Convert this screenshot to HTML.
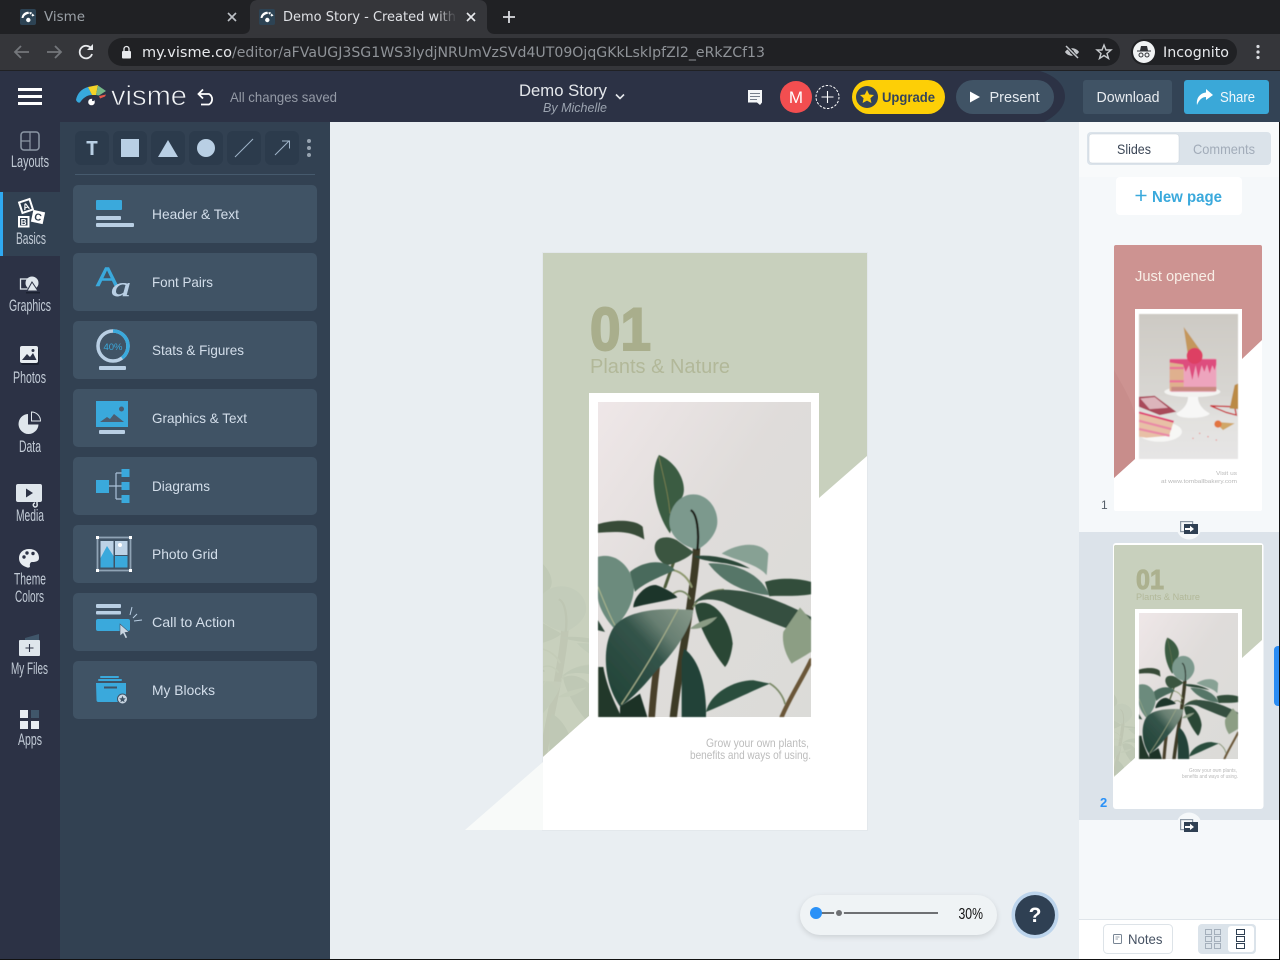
<!DOCTYPE html>
<html lang="en"><head><meta charset="utf-8"><title>Demo Story - Visme</title>
<style>
html,body{margin:0;padding:0;background:#e9eef2;width:1280px;height:960px;overflow:hidden}
svg{display:block}
text{font-family:"Liberation Sans",sans-serif}
.d{font-family:"DejaVu Sans",sans-serif}
.si{font-size:16.5px;fill:#c3ccd7;text-anchor:start}
.it{font-size:14px;fill:#d3deea}
</style></head><body>
<svg width="1280" height="960" viewBox="0 0 1280 960" xmlns="http://www.w3.org/2000/svg">
<defs>
<filter id="soft" x="-2%" y="-2%" width="104%" height="104%"><feGaussianBlur stdDeviation=".45"/></filter>
<linearGradient id="wall" x1="0" y1="0" x2="1" y2="1"><stop offset="0" stop-color="#efe7e8"/><stop offset=".45" stop-color="#dfdcda"/><stop offset="1" stop-color="#dbdbd8"/></linearGradient>
<linearGradient id="bigleaf" x1="0" y1="1" x2="1" y2="0"><stop offset="0" stop-color="#1f4034"/><stop offset=".55" stop-color="#34544a"/><stop offset=".72" stop-color="#687f72"/><stop offset="1" stop-color="#87998a"/></linearGradient>
<linearGradient id="fade" x1="0" x2="1"><stop offset="0" stop-color="#fff"/><stop offset=".88" stop-color="#fff"/><stop offset="1" stop-color="#fff" stop-opacity="0"/></linearGradient>
<mask id="tabfade" maskUnits="userSpaceOnUse" x="283" y="5" width="174" height="24"><rect x="283" y="5" width="174" height="24" fill="url(#fade)"/></mask>
<symbol id="plant" viewBox="414 -354 639 944" preserveAspectRatio="none">
<g fill="none" stroke-linecap="round">
<path d="M640 590C650 500 665 420 690 260C700 180 715 100 712 -30" stroke="#3d3a28" stroke-width="22"/>
<path d="M575 590C580 520 585 480 590 440" stroke="#4a3f2c" stroke-width="20"/>
<path d="M965 590C990 530 1030 470 1053 420" stroke="#6a5638" stroke-width="13"/>
<path d="M615 200L650 100" stroke="#4d5b3a" stroke-width="9"/>
<path d="M640 150C665 155 685 175 695 200" stroke="#8e9870" stroke-width="6"/>
<path d="M640 220C660 205 680 215 690 235" stroke="#7c8a68" stroke-width="5"/>
<path d="M700 260C720 225 750 210 790 208" stroke="#7c8a68" stroke-width="5"/>
<path d="M930 490C955 505 970 530 975 550" stroke="#7c8a68" stroke-width="5"/>
</g>
<path d="M597-195C570-150 575-40 630 40L660-60C690-90 660-170 597-195Z" fill="#3a5b43"/>
<path d="M597-190C610-130 625-80 630-20" stroke="#7c8250" stroke-width="2.5" fill="none"/>
<path d="M414 12C470-5 530 0 548 20L553 58C510 30 460 35 414 38Z" fill="#374c37"/>
<path d="M600 55C570 70 585 120 620 135C650 130 690 110 700 95L650 60C630 50 615 50 600 55Z" fill="#3b5540"/>
<path d="M414 440V590H440Z" fill="#a9b7a1"/>
<path d="M785 100C830 70 900 60 925 100L920 165C890 130 840 125 785 100Z" fill="#87a194"/>
<path d="M700 108C760 100 830 120 870 145L800 130C760 125 720 120 700 108Z" fill="#2c4737"/>
<path d="M745 130C800 125 900 150 928 225C860 220 790 190 745 130Z" fill="#567667"/>
<path d="M915 185C960 170 1020 175 1053 185V222C1010 230 960 225 928 228Z" fill="#324e3a"/>
<path d="M700 250C730 215 770 205 820 210C900 215 1000 260 1053 290V352C970 320 860 280 790 245C760 235 725 235 700 250Z" fill="#34503f"/>
<path d="M414 110C470 95 510 140 522 190C525 250 490 300 460 322C440 300 414 260 414 230Z" fill="#6c8b7d"/>
<path d="M414 200C430 240 450 290 465 315" stroke="#aab58e" stroke-width="3" fill="none"/>
<path d="M510 155C560 115 620 120 645 150C600 170 550 190 525 215Z" fill="#4a6a5b"/>
<path d="M520 262C520 230 560 190 590 195C620 205 650 225 652 232C610 245 560 250 520 262Z" fill="#1e3429"/>
<path d="M414 300L435 335L414 330Z" fill="#2e483a"/>
<path d="M430 440C440 500 465 550 485 590H415V440Z" fill="#22372b"/>
<path d="M480 558L540 520L562 590H480Z" fill="#1c3127"/>
<path d="M480 558C420 470 430 350 470 310C520 265 620 262 700 270C690 330 640 400 590 450C550 500 510 540 480 558Z" fill="url(#bigleaf)"/>
<path d="M484 552C540 470 600 370 655 266" stroke="#a5ae8a" stroke-width="3.5" fill="none"/>
<path d="M705 255C750 225 810 290 818 370C815 400 805 430 795 440C760 400 710 310 705 255Z" fill="#2b4636"/>
<path d="M665 590V420L672 385C720 420 740 500 738 590Z" fill="#244337"/>
<path d="M738 575C750 520 820 480 880 480L930 490C880 510 800 550 738 575Z" fill="#2b4e3c"/>
<path d="M970 335L1020 262L1053 300V395C1030 410 1010 420 995 430C975 400 965 365 970 335Z" fill="#8c9e84"/>
<path d="M690 325C720 300 750 295 772 290C750 315 720 330 690 325Z" fill="#8b9c85"/>
<path d="M628 5C628-40 660-77 700-77S772-40 772 5C772 40 740 75 712 88C670 80 628 50 628 5Z" fill="#7b998d"/>
<path d="M692-30C712-20 718 40 712 90" stroke="#1f1f17" stroke-width="7" fill="none"/>
</symbol>
<symbol id="cake" viewBox="178 576 297 436" preserveAspectRatio="none">
<defs><linearGradient id="cbg" x1="0" y1="0" x2="0" y2="1"><stop offset="0" stop-color="#cdcac4"/><stop offset=".55" stop-color="#d8d6d2"/><stop offset=".72" stop-color="#e2e1df"/><stop offset="1" stop-color="#e6e5e5"/></linearGradient></defs>
<rect x="178" y="576" width="297" height="436" fill="url(#cbg)"/>
<path d="M312 615L367 692L324 695Z" fill="#c4975c"/>
<ellipse cx="338" cy="810" rx="84" ry="16" fill="#f3f3f1"/>
<path d="M325 825H355C355 850 372 865 390 875C385 890 295 895 290 875C308 865 325 850 325 825Z" fill="#f7f7f6"/>
<rect x="270" y="710" width="140" height="100" rx="6" fill="#eda4bd"/>
<rect x="270" y="715" width="42" height="92" fill="#dfb08e"/>
<rect x="270" y="735" width="42" height="7" fill="#ea7398"/><rect x="270" y="775" width="42" height="7" fill="#ea7398"/>
<path d="M270 712H410V728L405 745L398 730L390 755L382 728L374 750L366 730L356 770L348 730L338 775L328 730L318 750L310 728L270 722Z" fill="#de4e7e"/>
<rect x="275" y="795" width="135" height="13" fill="#c98a82"/>
<circle cx="345" cy="702" r="24" fill="#dd3f63"/>
<path d="M178 825L225 822L290 870L240 880L178 855Z" fill="#a9485a"/>
<path d="M182 830L225 826L265 858L210 862Z" fill="#dcb4bb"/>
<ellipse cx="240" cy="930" rx="67" ry="30" fill="#f7f7f5"/>
<path d="M178 872L282 900L268 942L200 948L178 945Z" fill="#e8c0a6"/>
<path d="M178 897L275 922M178 922L270 942" stroke="#e98aa6" stroke-width="7"/>
<path d="M178 872L282 900" stroke="#df4274" stroke-width="6"/>
<path d="M392 852L465 855L470 880L440 872Z" fill="none" stroke="#c73238" stroke-width="4"/>
<path d="M465 790L475 785V862L450 860Z" fill="#bb8a45"/>
<path d="M405 900L465 905L430 925Z" fill="#d0a666"/><ellipse cx="415" cy="907" rx="11" ry="11" fill="#e2743f"/>
<g fill="#e9817e"><circle cx="360" cy="935" r="2"/><circle cx="385" cy="945" r="2"/><circle cx="340" cy="950" r="2"/><circle cx="410" cy="955" r="2"/></g>
</symbol>
<symbol id="fav" viewBox="0 0 16 16"><rect width="16" height="16" rx="2" fill="#2d4354"/><path d="M1.5 9C2 5 5 2.5 8.500 2.800L9 4.700C6.500 5 4 6.500 3.500 9Z M9.500 3L12 3.500L11 5.500L9.700 5Z M12.500 4.500L14.500 6.500L12.500 7.500L11.500 6.500Z" fill="#fff"/><circle cx="8.300" cy="11" r="2.200" fill="#fff"/></symbol>
<symbol id="conn" viewBox="0 0 18 13"><rect x=".6" y=".6" width="12" height="10" fill="#f5f8fa" stroke="#8c98a5" stroke-width="1.200"/><rect x="4" y="3" width="14" height="10" fill="#2f4053"/><path d="M5 7H10V4.800L14 8L10 11V9H5Z" fill="#fff"/></symbol>
</defs>

<!-- browser chrome -->
<rect width="1280" height="34" fill="#202124"/>
<path d="M242 34C248 34 250 31 250 27V8C250 3 253 0 258 0H479C484 0 487 3 487 8V27C487 31 490 34 495 34Z" fill="#35363a"/>
<rect y="34" width="1280" height="37" fill="#35363a"/>
<rect y="70" width="1280" height="1" fill="#202124"/>
<use href="#fav" x="20" y="9" width="16" height="16"/>
<text class="d" x="44" y="21" font-size="13" fill="#9aa0a6" textLength="41" lengthAdjust="spacingAndGlyphs">Visme</text>
<path d="M228 13L236 21M236 13L228 21" stroke="#bdc1c6" stroke-width="1.600"/>
<use href="#fav" x="259" y="9" width="16" height="16"/>
<text class="d" x="283" y="21" font-size="13" fill="#dfe1e5" textLength="173" lengthAdjust="spacingAndGlyphs" mask="url(#tabfade)">Demo Story - Created with</text>
<path d="M467 13L475 21M475 13L467 21" stroke="#e8eaed" stroke-width="1.600"/>
<path d="M509 11V23M503 17H515" stroke="#dadce0" stroke-width="1.800"/>
<path d="M29 52H15.500M21 46L15 52L21 58" fill="none" stroke="#74777b" stroke-width="1.800"/>
<path d="M47 52H60.500M55 46L61 52L55 58" fill="none" stroke="#74777b" stroke-width="1.800"/>
<path d="M91.500 49A6.300 6.300 0 1 0 92 54" fill="none" stroke="#e8eaed" stroke-width="1.800"/><path d="M93 44V50H87Z" fill="#e8eaed"/>
<rect x="108" y="38" width="1012" height="28" rx="14" fill="#202124"/>
<rect x="122" y="51" width="9" height="7.500" rx="1" fill="#e8eaed"/><path d="M124 51V49A2.500 2.500 0 0 1 129 49V51" fill="none" stroke="#e8eaed" stroke-width="1.300"/>
<text class="d" x="142" y="57" font-size="14" fill="#e8eaed" textLength="90" lengthAdjust="spacingAndGlyphs">my.visme.co</text>
<text class="d" x="232" y="57" font-size="14" fill="#8f9398" textLength="533" lengthAdjust="spacingAndGlyphs">/editor/aFVaUGJ3SG1WS3IydjNRUmVzSVd4UT09OjqGKkLskIpfZI2_eRkZCf13</text>
<path d="M1065 52C1068 47 1076 47 1079 52C1076 57 1068 57 1065 52Z" fill="#c3c6ca"/><circle cx="1072" cy="52" r="2" fill="#202124"/><path d="M1066 45L1078 59" stroke="#202124" stroke-width="3.500"/><path d="M1066 46L1078 58" stroke="#c3c6ca" stroke-width="1.500"/>
<path d="M1104 45L1106 50H1111L1107 53.500L1108.500 58.500L1104 55.500L1099.500 58.500L1101 53.500L1097 50H1102Z" fill="none" stroke="#c7cacd" stroke-width="1.400"/>
<rect x="1131" y="39" width="106" height="26" rx="13" fill="#202124"/>
<circle cx="1144" cy="52" r="11" fill="#f1f3f4"/>
<path d="M1137 50.500H1151V51.500H1137ZM1140 50.500L1141 46H1147L1148 50.500Z" fill="#303236"/><circle cx="1141" cy="55" r="2" fill="none" stroke="#303236" stroke-width="1"/><circle cx="1147" cy="55" r="2" fill="none" stroke="#303236" stroke-width="1"/>
<text class="d" x="1163" y="57" font-size="14" fill="#e8eaed" textLength="66" lengthAdjust="spacingAndGlyphs">Incognito</text>
<g fill="#dadce0"><circle cx="1258" cy="46.500" r="1.600"/><circle cx="1258" cy="52" r="1.600"/><circle cx="1258" cy="57.500" r="1.600"/></g>

<!-- visme header -->
<rect y="71" width="1280" height="51" fill="#2c3245"/>
<path d="M1040 71H1280V122H1044C1056 116 1065 107 1065 96.500C1065 85 1056 76 1040 71Z" fill="#334355"/>
<g fill="#fff"><rect x="18" y="88" width="24" height="3"/><rect x="18" y="95" width="24" height="3"/><rect x="18" y="102" width="24" height="3"/></g>
<path d="M76 100C77 94 81 89 88 87L92 95C87 95 83 98 80 102.500C78 103 77 102 76 100Z" fill="#37a9dd"/>
<path d="M88 87L98 85L96 95L92 95Z" fill="#f5d428"/>
<path d="M98 85.500L106 91L99 95.500L96 95Z" fill="#75b98a"/>
<path d="M99 96L106 94.500L105 96.500L100 98.500Z" fill="#e7574a"/>
<circle cx="91.500" cy="102" r="3.300" fill="#fff"/><circle cx="93" cy="100" r="1.100" fill="#2c3245"/>
<text x="111" y="105" font-size="28" fill="#f2f4f6" stroke="#2c3245" stroke-width=".7" paint-order="normal" textLength="76" lengthAdjust="spacingAndGlyphs">visme</text>
<path d="M199 94H209A6 6 0 0 1 209 104.500H201" fill="none" stroke="#fff" stroke-width="1.800"/><path d="M203 89.500L198.500 94L203 98.500" fill="none" stroke="#fff" stroke-width="1.800"/>
<text x="230" y="102" font-size="14" fill="#949aa6" textLength="107" lengthAdjust="spacingAndGlyphs">All changes saved</text>
<text x="519" y="96" font-size="17" fill="#e4e7eb" textLength="88" lengthAdjust="spacingAndGlyphs">Demo Story</text>
<text x="543" y="112" font-size="13" font-style="italic" fill="#9ca4b0" textLength="64" lengthAdjust="spacingAndGlyphs">By Michelle</text>
<path d="M616 94.500L620 98.500L624 94.500" fill="none" stroke="#e4e7eb" stroke-width="1.600"/>
<path d="M748 90H762V102.500L760 105L757 102.500H748Z" fill="#f4f6f8"/><path d="M750 93.500H760M750 96.500H760M750 99.500H757" stroke="#77808c" stroke-width="1.100"/>
<circle cx="796" cy="97" r="16" fill="#f24e50"/>
<text x="796" y="103" font-size="17" fill="#fff" text-anchor="middle">M</text>
<circle cx="827.500" cy="97" r="11.500" fill="none" stroke="#fff" stroke-width="1" stroke-dasharray="2.500 1.500"/>
<path d="M827.500 91V103M821.500 97H833.500" stroke="#fff" stroke-width="1.100"/>
<rect x="852" y="80" width="93" height="34" rx="17" fill="#fdcf06"/>
<circle cx="867" cy="97" r="11" fill="#33445a"/>
<path d="M867 90L869.200 94.500L874 95L870.400 98.300L871.400 103L867 100.600L862.600 103L863.600 98.300L860 95L864.800 94.500Z" fill="#fdcf06"/>
<text x="882" y="102" font-size="14" font-weight="700" fill="#34445a" textLength="53" lengthAdjust="spacingAndGlyphs">Upgrade</text>
<rect x="956" y="80" width="98" height="34" rx="17" fill="#405365"/>
<path d="M970 91.500L980 97L970 102.500Z" fill="#fff"/>
<text x="989.500" y="102" font-size="15" fill="#e5eaef" textLength="50" lengthAdjust="spacingAndGlyphs">Present</text>
<rect x="1083" y="80" width="89" height="34" rx="3" fill="#405365"/>
<text x="1096.500" y="102" font-size="15" fill="#e8ecf0" textLength="63" lengthAdjust="spacingAndGlyphs">Download</text>
<rect x="1184" y="80" width="85" height="34" rx="3" fill="#3aa8d8"/>
<path d="M1197 105C1196 97 1201 93 1206 92.500V89L1213 95L1206 100V97C1202 97 1199 100 1197 105Z" fill="#fff"/>
<text x="1220" y="102" font-size="15" fill="#f2f8fc" textLength="35" lengthAdjust="spacingAndGlyphs">Share</text>

<!-- left sidebar -->
<rect y="122" width="60" height="838" fill="#2c3245"/>
<rect x="60" y="122" width="270" height="838" fill="#324152"/>
<rect y="192" width="60" height="64" fill="#324152"/>
<rect y="192" width="3" height="64" fill="#2fa9f1"/>

<rect x="21" y="132" width="18" height="18" rx="3" fill="none" stroke="#8c97a5" stroke-width="1.500"/><path d="M30 132V150M21 141H30" stroke="#8c97a5" stroke-width="1.200"/>
<text class="si" x="11" y="167" textLength="38" lengthAdjust="spacingAndGlyphs">Layouts</text>
<g transform="rotate(-18 26 206)"><rect x="20.500" y="200.500" width="11" height="11" fill="#2c3a4b" stroke="#fff" stroke-width="2"/><text x="26" y="209.500" font-size="9" font-weight="700" fill="#fff" text-anchor="middle">A</text></g>
<rect x="18" y="216" width="11.500" height="11.500" fill="#fff"/><rect x="20" y="218" width="7.500" height="7.500" fill="#2c3a4b"/><text x="23.700" y="225" font-size="8" font-weight="700" fill="#fff" text-anchor="middle">B</text>
<g transform="rotate(12 38 217)"><rect x="32" y="211" width="12" height="12" fill="#fff"/><text x="38" y="220.500" font-size="10" font-weight="700" fill="#2c3a4b" text-anchor="middle">C</text></g>
<text class="si" x="16" y="244" textLength="30" lengthAdjust="spacingAndGlyphs">Basics</text>
<rect x="20.500" y="279" width="12" height="10" fill="none" stroke="#dfe6ec" stroke-width="1.300"/><circle cx="32" cy="283" r="6.500" fill="#dfe6ec"/><path d="M32 282L38 291H27Z" fill="#dfe6ec" stroke="#2c3245" stroke-width="1"/><rect x="26" y="292" width="14" height="1.500" fill="#1b2130"/>
<text class="si" x="9" y="311" textLength="42" lengthAdjust="spacingAndGlyphs">Graphics</text>
<rect x="21" y="348" width="18" height="17" rx="2" fill="#1b2130"/><rect x="20" y="346" width="18" height="17" rx="2" fill="#e8edf1"/><path d="M22 360L27 354L30 357L33 353L36.500 360Z" fill="#2c3245"/><circle cx="33" cy="350.500" r="1.500" fill="#2c3245"/>
<text class="si" x="13" y="383" textLength="33" lengthAdjust="spacingAndGlyphs">Photos</text>
<path d="M28 414A10 10 0 1 0 38.500 424.500H28Z" fill="#dfe6ec"/><path d="M31.500 412V421H40.500A9 9 0 0 0 31.500 412Z" fill="#2c3245" stroke="#dfe6ec" stroke-width="1"/>
<text class="si" x="19" y="452" textLength="22" lengthAdjust="spacingAndGlyphs">Data</text>
<rect x="16" y="484" width="26" height="18" rx="2" fill="#dfe6ec"/><path d="M26 488.500L33 493L26 497.500Z" fill="#2c3245"/><path d="M37 492V504A2 2 0 1 1 35 503" fill="none" stroke="#dfe6ec" stroke-width="1.500"/>
<text class="si" x="16" y="521" textLength="28" lengthAdjust="spacingAndGlyphs">Media</text>
<path d="M29 549C36 549 39 553 39 558C39 562 34 562 32 562C30 562 29.500 565 30 566C30 568 28 568 26 567C21 565 19 562 19 558C19 553 23 549 29 549Z" fill="#e8edf1"/><g fill="#2c3245"><circle cx="24" cy="557" r="1.700"/><circle cx="27" cy="553" r="1.700"/><circle cx="33" cy="553.500" r="1.700"/></g>
<text class="si" x="14" y="584.500" textLength="32" lengthAdjust="spacingAndGlyphs">Theme</text>
<text class="si" x="15" y="602" textLength="29" lengthAdjust="spacingAndGlyphs">Colors</text>
<path d="M25 638L39 634V640H25Z" fill="#40566a"/><rect x="19" y="640" width="21" height="16" rx="1" fill="#dfe6ec"/><path d="M29.500 644V652M25.500 648H33.500" stroke="#2c3245" stroke-width="1.100"/>
<text class="si" x="11" y="674" textLength="37" lengthAdjust="spacingAndGlyphs">My Files</text>
<rect x="20" y="710" width="8" height="8" fill="#e8edf1"/><rect x="31" y="710" width="8" height="8" fill="#40566a"/><rect x="20" y="721" width="8" height="8" fill="#e8edf1"/><rect x="31" y="721" width="8" height="8" fill="#e8edf1"/>
<text class="si" x="18" y="745" textLength="24" lengthAdjust="spacingAndGlyphs">Apps</text>

<!-- toolbar -->
<g fill="#2c3b4c"><rect x="75" y="131" width="34" height="34" rx="6"/><rect x="113" y="131" width="34" height="34" rx="6"/><rect x="151" y="131" width="34" height="34" rx="6"/><rect x="189" y="131" width="34" height="34" rx="6"/><rect x="227" y="131" width="34" height="34" rx="6"/><rect x="265" y="131" width="34" height="34" rx="6"/></g>
<path d="M86.500 141H97.500V143.500H93.500V155H90.500V143.500H86.500Z" fill="#b9cfe4"/>
<rect x="121" y="139" width="18" height="18" fill="#b9cfe4"/>
<path d="M168 140L178 157H158Z" fill="#b9cfe4"/>
<circle cx="206" cy="148" r="9" fill="#b9cfe4"/>
<path d="M235 157L253 139" stroke="#9fb4c9" stroke-width="1"/>
<path d="M275 155L289 141M282 141H289.500V148.500" fill="none" stroke="#9fb4c9" stroke-width="1"/>
<g fill="#97a3b0"><circle cx="309" cy="141" r="2"/><circle cx="309" cy="148" r="2"/><circle cx="309" cy="155" r="2"/></g>
<rect x="75" y="174" width="240" height="1" fill="#465a6d"/>

<!-- items -->
<g fill="#405365"><rect x="73" y="185" width="244" height="58" rx="5"/><rect x="73" y="253" width="244" height="58" rx="5"/><rect x="73" y="321" width="244" height="58" rx="5"/><rect x="73" y="389" width="244" height="58" rx="5"/><rect x="73" y="457" width="244" height="58" rx="5"/><rect x="73" y="525" width="244" height="58" rx="5"/><rect x="73" y="593" width="244" height="58" rx="5"/><rect x="73" y="661" width="244" height="58" rx="5"/></g>
<text class="it" x="152" y="219" textLength="87" lengthAdjust="spacingAndGlyphs">Header &amp; Text</text>
<text class="it" x="152" y="287" textLength="61" lengthAdjust="spacingAndGlyphs">Font Pairs</text>
<text class="it" x="152" y="355" textLength="92" lengthAdjust="spacingAndGlyphs">Stats &amp; Figures</text>
<text class="it" x="152" y="423" textLength="95" lengthAdjust="spacingAndGlyphs">Graphics &amp; Text</text>
<text class="it" x="152" y="491" textLength="58" lengthAdjust="spacingAndGlyphs">Diagrams</text>
<text class="it" x="152" y="559" textLength="66" lengthAdjust="spacingAndGlyphs">Photo Grid</text>
<text class="it" x="152" y="627" textLength="83" lengthAdjust="spacingAndGlyphs">Call to Action</text>
<text class="it" x="152" y="695" textLength="63" lengthAdjust="spacingAndGlyphs">My Blocks</text>

<rect x="96" y="200" width="26" height="10" rx="1" fill="#3aa9dc"/><rect x="96" y="216" width="25" height="4" rx="1" fill="#b9cfe4"/><rect x="96" y="223" width="38" height="4" rx="1" fill="#b9cfe4"/>
<text x="96" y="286" font-size="27" fill="#3aa9dc" stroke="#3aa9dc" stroke-width=".6" textLength="22" lengthAdjust="spacingAndGlyphs">A</text>
<text x="111" y="296" font-size="27" font-style="italic" fill="#b9cfe4" stroke="#b9cfe4" stroke-width=".4" textLength="20" lengthAdjust="spacingAndGlyphs" style="font-family:'Liberation Serif',serif">a</text>
<circle cx="113" cy="346" r="15" fill="none" stroke="#b9cfe4" stroke-width="3.500"/>
<path d="M113 331A15 15 0 0 1 122 358" fill="none" stroke="#3aa9dc" stroke-width="3.500"/>
<text x="113" y="350" font-size="9.500" fill="#3aa9dc" text-anchor="middle">40%</text>
<rect x="99" y="366" width="27" height="4" rx="1" fill="#b9cfe4"/>
<rect x="96" y="401" width="32" height="26" fill="#3aa9dc"/><path d="M100 422L107 417L110 419L114 414L124 422Z" fill="#4c5d70"/><circle cx="121.500" cy="409" r="2.500" fill="#4c5d70"/>
<rect x="99" y="430" width="26" height="4" rx="1" fill="#b9cfe4"/>
<path d="M109 486H122M116 473V499M116 473H122M116 499H122" fill="none" stroke="#a9c0d8" stroke-width="1.200"/>
<rect x="96" y="480" width="13" height="13" fill="#3aa9dc"/><rect x="121.500" y="469" width="8" height="8" fill="#3aa9dc"/><rect x="121.500" y="482" width="8" height="8" fill="#3aa9dc"/><rect x="121.500" y="495" width="8" height="8" fill="#3aa9dc"/>
<rect x="97.500" y="537.500" width="33" height="33" fill="none" stroke="#8fa3b5" stroke-width="1.800"/>
<rect x="100.500" y="541" width="13" height="26.500" fill="#bcd2e6"/><path d="M100.500 567.500V558L107 546L113.500 556V567.500Z" fill="#3aa9dc"/>
<rect x="115" y="541" width="12.500" height="14" fill="#bcd2e6"/><circle cx="120" cy="545" r="2" fill="#fff"/>
<path d="M115 556H127.500V567.500H115Z" fill="#3aa9dc"/>
<g fill="#fff"><rect x="96" y="536" width="3" height="3"/><rect x="129" y="536" width="3" height="3"/><rect x="96" y="569" width="3" height="3"/><rect x="129" y="569" width="3" height="3"/></g>
<rect x="96" y="604" width="25" height="4" rx="1" fill="#b9cfe4"/><rect x="96" y="611" width="25" height="3.500" rx="1" fill="#b9cfe4"/>
<rect x="96" y="619" width="34" height="12" rx="2" fill="#3aa9dc"/>
<path d="M120 624L120 636L123 633.500L125.500 638.500L127.500 637.500L125 632.500L129 632Z" fill="#c9d6e2" stroke="#405365" stroke-width=".6"/>
<path d="M130 615L132 607M133 618L137 614M134 621L142 620" stroke="#b9cfe4" stroke-width="1"/>
<rect x="100" y="676" width="19" height="2" rx="1" fill="#3aa9dc"/><rect x="98" y="679" width="24" height="2" rx="1" fill="#3aa9dc"/>
<path d="M96 683H126V702H98A2 2 0 0 1 96.500 700Z" fill="#3aa9dc"/><rect x="104" y="686.500" width="13" height="2" fill="#405365"/>
<circle cx="122.500" cy="699" r="5" fill="#c9d6e2" stroke="#405365" stroke-width="1"/><path d="M122.500 695.800L123.500 698.200L125.800 698.400L124 700L124.600 702.300L122.500 701L120.400 702.300L121 700L119.200 698.400L121.500 698.200Z" fill="#405365"/>

<!-- canvas -->
<rect x="330" y="122" width="749" height="838" fill="#e9eef2"/>
<rect x="542" y="252" width="326" height="579" fill="#e3e8ec"/>
<rect x="543" y="253" width="324" height="577" fill="#fff"/>
<path d="M543 253H867V456L819 498V393H589V716L543 757Z" fill="#c8d0bd"/>
<svg x="543" y="510" width="46" height="247" viewBox="0 0 46 247"><use href="#plant" x="-80" y="0" width="220" height="260" opacity=".05"/></svg>
<path d="M589 716L543 757V830H589Z" fill="#fff"/>
<path d="M543 762L465 830H543Z" fill="#f8faf9"/>
<rect x="589" y="393" width="230" height="333" fill="#fff"/>
<rect x="598" y="402" width="213" height="315" fill="url(#wall)"/>
<use href="#plant" x="598" y="402" width="213" height="315" filter="url(#soft)"/>
<text x="590" y="350" font-size="60" font-weight="700" fill="#a9ae8c" stroke="#a9ae8c" stroke-width="2" textLength="61" lengthAdjust="spacingAndGlyphs">01</text>
<text x="590" y="373" font-size="20" fill="#b2b899" textLength="140" lengthAdjust="spacingAndGlyphs">Plants &amp; Nature</text>
<text x="706" y="747" font-size="12" fill="#bcbcbc" textLength="103" lengthAdjust="spacingAndGlyphs">Grow your own plants,</text>
<text x="690" y="759" font-size="12" fill="#bcbcbc" textLength="121" lengthAdjust="spacingAndGlyphs">benefits and ways of using.</text>

<!-- zoom and help -->
<rect x="800" y="895" width="197" height="40" rx="20" fill="#000" opacity=".12" transform="translate(0 2)" style="filter:blur(3px)"/>
<rect x="800" y="895" width="197" height="40" rx="20" fill="#eff3f5"/>
<rect x="816" y="912" width="122" height="2" fill="#6e7073"/>
<circle cx="839" cy="913" r="5" fill="#eff3f5"/><circle cx="839" cy="913" r="3" fill="#6e7073"/>
<circle cx="816" cy="913" r="6" fill="#2a91f7"/>
<text x="958.500" y="919" font-size="16" fill="#111" textLength="24.500" lengthAdjust="spacingAndGlyphs">30%</text>
<circle cx="1035" cy="915" r="23.500" fill="#bcd4ec"/>
<circle cx="1035" cy="915" r="20" fill="#2f4053"/>
<text x="1035" y="922" font-size="21" font-weight="700" fill="#fff" text-anchor="middle">?</text>

<!-- right panel -->
<rect x="1079" y="122" width="201" height="838" fill="#f5f8fa"/>
<rect x="1079" y="122" width="201" height="55" fill="#f8fafb"/>
<rect x="1087" y="132" width="184" height="33" rx="4" fill="#dbe3ea"/>
<rect x="1089" y="134" width="90" height="29" rx="3" fill="#fff" stroke="#c7d0d8" stroke-width=".5"/>
<text x="1117" y="154" font-size="14" fill="#3b4656" textLength="34" lengthAdjust="spacingAndGlyphs">Slides</text>
<text x="1193" y="154" font-size="14" fill="#a2acb9" textLength="62" lengthAdjust="spacingAndGlyphs">Comments</text>
<rect x="1116" y="177" width="126" height="38" rx="4" fill="#fff"/>
<path d="M1141 190V201M1135.500 195.500H1146.500" stroke="#3aa9dc" stroke-width="1.600"/>
<text x="1152" y="202" font-size="15.500" font-weight="700" fill="#3aa9dc" textLength="70" lengthAdjust="spacingAndGlyphs">New page</text>

<!-- thumb 1 -->
<rect x="1114" y="245" width="148" height="266" rx="2" fill="#fff"/>
<path d="M1116 245H1260A2 2 0 0 1 1262 247V340L1242 359V309H1135V459L1114 478V247A2 2 0 0 1 1116 245Z" fill="#cd9391"/>
<path d="M1114 370C1122 385 1132 400 1135 415V459L1114 478Z" fill="#bd807f" opacity=".3"/>
<text x="1135" y="281" font-size="15" fill="#f8eee6" textLength="80" lengthAdjust="spacingAndGlyphs">Just opened</text>
<use href="#cake" x="1139" y="314" width="99" height="145" filter="url(#soft)"/>
<text x="1216" y="475" font-size="5.500" fill="#b9b9b9" textLength="21" lengthAdjust="spacingAndGlyphs">Visit us</text>
<text x="1161" y="483" font-size="5.500" fill="#b9b9b9" textLength="76" lengthAdjust="spacingAndGlyphs">at www.tomballbakery.com</text>
<text x="1101" y="509" font-size="12" fill="#555e68">1</text>
<rect x="1079" y="532" width="201" height="288" fill="#dce3ea"/>
<circle cx="1189" cy="527" r="12.500" fill="#f5f8fa"/>
<use href="#conn" x="1180" y="521" width="18" height="13"/>

<!-- thumb 2 -->
<rect x="1113" y="543" width="150.500" height="266" rx="3" fill="#fff"/>
<path d="M1115 545H1262V640L1242 658V609H1135V758L1114 777V546Z" fill="#c8d0bd"/>
<svg x="1114" y="670" width="21" height="105" viewBox="0 0 21 105"><use href="#plant" x="-35" y="0" width="95" height="115" opacity=".06"/></svg>
<path d="M1135 758L1114 777V790H1135Z" fill="#fff"/>
<text x="1136" y="589" font-size="28" font-weight="700" fill="#acb18f" stroke="#acb18f" stroke-width="1" textLength="28" lengthAdjust="spacingAndGlyphs">01</text>
<text x="1136" y="600" font-size="9" fill="#b2b899" textLength="64" lengthAdjust="spacingAndGlyphs">Plants &amp; Nature</text>
<rect x="1139" y="613" width="99" height="146" fill="url(#wall)"/>
<use href="#plant" x="1139" y="613" width="99" height="146" filter="url(#soft)"/>
<text x="1189" y="772" font-size="5.500" fill="#b9b9b9" textLength="48" lengthAdjust="spacingAndGlyphs">Grow your own plants,</text>
<text x="1182" y="778" font-size="5.500" fill="#b9b9b9" textLength="56" lengthAdjust="spacingAndGlyphs">benefits and ways of using.</text>
<text x="1100" y="807" font-size="13" font-weight="700" fill="#2a91f7">2</text>
<circle cx="1189" cy="825" r="12.500" fill="#f5f8fa"/>
<use href="#conn" x="1180" y="819" width="18" height="13"/>
<path d="M1280 646H1278A4 4 0 0 0 1274 650V702A4 4 0 0 0 1278 706H1280Z" fill="#2a8cf4"/>

<!-- bottom bar -->
<rect x="1079" y="919" width="201" height="41" fill="#fff"/>
<rect x="1079" y="919" width="201" height="1" fill="#dfe5ea"/>
<rect x="1103.500" y="924.500" width="69" height="29" rx="4" fill="#fff" stroke="#dde3e8"/>
<rect x="1113.500" y="934.500" width="8" height="9" rx="1" fill="#fff" stroke="#788594"/><path d="M1115.500 937H1119.500M1115.500 939H1118" stroke="#788594" stroke-width=".8"/>
<text x="1128" y="944" font-size="14" fill="#465263" textLength="34.500" lengthAdjust="spacingAndGlyphs">Notes</text>
<rect x="1198" y="924" width="58" height="30" rx="4" fill="#dbe3ea"/>
<rect x="1228" y="926" width="26" height="26" rx="3" fill="#fff"/>
<g fill="none" stroke="#a4afbb"><rect x="1205.500" y="929.500" width="6" height="5"/><rect x="1214.500" y="929.500" width="6" height="5"/><rect x="1205.500" y="936.500" width="6" height="5"/><rect x="1214.500" y="936.500" width="6" height="5"/><rect x="1205.500" y="943.500" width="6" height="5"/><rect x="1214.500" y="943.500" width="6" height="5"/></g>
<g fill="none" stroke="#2f4053"><rect x="1236.500" y="929.500" width="8" height="5"/><rect x="1236.500" y="936.500" width="8" height="5"/><rect x="1236.500" y="943.500" width="8" height="5"/></g>

<rect x="1279" y="122" width="1" height="838" fill="#111"/>
<rect y="959" width="1280" height="1" fill="#111"/>
</svg>
</body></html>
